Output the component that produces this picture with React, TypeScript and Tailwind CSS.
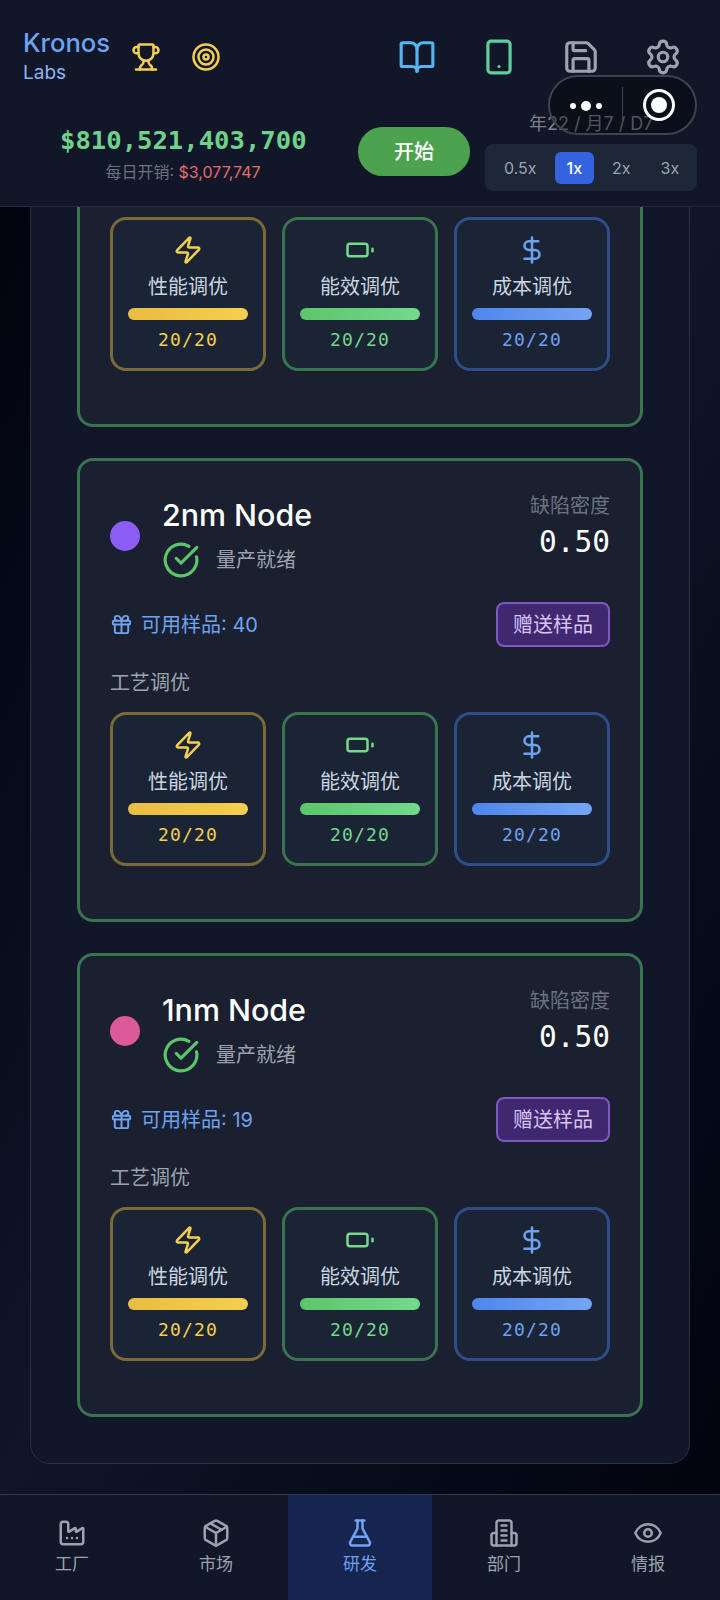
import React from 'react';
import { Trophy, Target, BookOpen, Smartphone, Save, Settings, Zap, DollarSign, Gift, CircleCheckBig, Factory, Package, FlaskConical, Eye } from 'lucide-react';

const sans = 'font-["Inter","Noto_Sans_CJK_SC",sans-serif]';
const mono = 'font-["DejaVu_Sans_Mono",monospace]';

function BatteryIcon() {
  return (
    <svg width="30" height="30" viewBox="0 0 24 24" fill="none" stroke="currentColor" strokeWidth="2" strokeLinecap="round" strokeLinejoin="round">
      <rect x="2" y="7" width="16" height="10" rx="2" />
      <path d="M22 11v2" />
    </svg>
  );
}

function Tile({ kind }: { kind: 'perf' | 'power' | 'cost' }) {
  const c = {
    perf: { label: '性能调优', border: 'border-[#7a6a38]', text: 'text-[#f5cf4f]', bar: 'from-[#e8bd42] to-[#f5cf4f]', icon: <Zap size={30} strokeWidth={2} /> },
    power: { label: '能效调优', border: 'border-[#3a7350]', text: 'text-[#74d98c]', bar: 'from-[#5cc56c] to-[#74d98c]', icon: <BatteryIcon /> },
    cost: { label: '成本调优', border: 'border-[#2f4d8a]', text: 'text-[#6ea2f2]', bar: 'from-[#4f86ec] to-[#74a5f4]', icon: <DollarSign size={30} strokeWidth={2} /> },
  }[kind];
  return (
    <div className={`h-[154px] rounded-2xl border-[3px] ${c.border} bg-[#1a2434] flex flex-col items-center pt-[15px]`}>
      <div className={`h-[30px] ${c.text}`}>{c.icon}</div>
      <div className="mt-[8px] text-[20px] leading-[28px] text-[#cbd5e1]">{c.label}</div>
      <div className={`mt-[7px] h-[12px] w-[120px] rounded-full bg-gradient-to-r ${c.bar}`} />
      <div className={`mt-[7px] text-[18px] leading-[26px] tracking-[1.2px] ${mono} ${c.text}`}>20/20</div>
    </div>
  );
}

function Node({ name, dot, samples }: { name: string; dot: string; samples: number }) {
  return (
    <div className="h-[464px] rounded-2xl border-[3px] border-[#3a7350] bg-[#1a2030] px-[30px] pt-[30px]">
      <div className="flex justify-between">
        <div className="flex items-center gap-[22px]">
          <div className={`w-[30px] h-[30px] rounded-full mt-[2px] ${dot}`} />
          <div>
            <div className="text-[30.4px] leading-[38px] font-medium text-white mt-[5px]">{name}</div>
            <div className="flex items-center gap-[16px] mt-[7px] text-[20px] text-[#9ca3af]">
              <CircleCheckBig size={38} strokeWidth={2} className="text-[#5cc56c]" />
              <span>量产就绪</span>
            </div>
          </div>
        </div>
        <div className="text-right">
          <div className="text-[20px] leading-[28px] text-[#6b7280] mt-[1px]">缺陷密度</div>
          <div className={`text-[29.5px] leading-[38px] text-white mt-[3px] ${mono}`}>0.50</div>
        </div>
      </div>
      <div className="flex justify-between items-center mt-[23px]">
        <div className="flex items-center gap-[8px] text-[20px] text-[#6ea2f2]">
          <Gift size={23} strokeWidth={2} />
          <span>可用样品: {samples}</span>
        </div>
        <button className="w-[114px] h-[45px] rounded-lg border-2 border-[#7e57c2] bg-[#3f2870] text-[20px] text-[#d8c4f5]">赠送样品</button>
      </div>
      <div className="text-[20px] leading-[28px] text-[#9ca3af] mt-[22px]">工艺调优</div>
      <div className="grid grid-cols-3 gap-[16px] mt-[15px]">
        <Tile kind="perf" />
        <Tile kind="power" />
        <Tile kind="cost" />
      </div>
    </div>
  );
}

function DeptIcon() {
  return (
    <svg width="30" height="30" viewBox="0 0 24 24" fill="none" stroke="currentColor" strokeWidth="2" strokeLinecap="round" strokeLinejoin="round">
      <path d="M6 22V4a2 2 0 0 1 2-2h8a2 2 0 0 1 2 2v18" />
      <path d="M6 12H4a2 2 0 0 0-2 2v6a2 2 0 0 0 2 2h16a2 2 0 0 0 2-2v-6a2 2 0 0 0-2-2h-2" />
      <path d="M10 6h4M10 10h4M10 14h4M10 18h4" />
    </svg>
  );
}

function Tab({ icon, label, active }: { icon: React.ReactNode; label: string; active?: boolean }) {
  return (
    <div className={`flex-1 flex flex-col items-center pt-[23px] ${active ? 'bg-[#152550] text-[#6ea2f2]' : 'text-[#9ca3af]'}`}>
      {icon}
      <div className="text-[17px] leading-[26px] mt-[3px]">{label}</div>
    </div>
  );
}

export default function App() {
  return (
    <div className={`relative h-[1600px] w-[720px] overflow-hidden flex flex-col bg-[#111728] ${sans}`}>
      <header className="relative z-10 h-[207px] shrink-0 bg-[#111728] border-b border-[#252b3d]">
        <div className="flex items-start pt-[28px] pl-[23px] pr-[38px]">
          <div className="w-[86px] text-[#6ea2f2]">
            <div className="text-[25.6px] leading-[30px] font-medium whitespace-nowrap">Kronos</div>
            <div className="text-[19px] leading-[24px] mt-[3px] text-[#8fb4f0]">Labs</div>
          </div>
          <div className="ml-[22px] mt-[14px] flex gap-[30px] text-[#f5cf4f]">
            <Trophy size={30} strokeWidth={2} />
            <Target size={30} strokeWidth={2} />
          </div>
          <div className="ml-auto mt-[10px] flex items-center gap-[44px]">
            <BookOpen size={38} strokeWidth={2} className="text-[#56b4f0]" />
            <Smartphone size={38} strokeWidth={2} className="text-[#5ed0a0]" />
            <Save size={38} strokeWidth={2} className="text-[#9ca3af]" />
            <Settings size={38} strokeWidth={2} className="text-[#9ca3af]" />
          </div>
        </div>
        <div className="flex items-start mt-[39px] pl-[60px] pr-[23px]">
          <div className="w-[246px] text-center">
            <div className={`text-[25.6px] leading-[32px] font-bold text-[#6fd28a] ${mono}`}>$810,521,403,700</div>
            <div className="text-[16px] leading-[22px] text-[#6b7280] mt-[5px]">每日开销: <span className="text-[#e26d6d]">$3,077,747</span></div>
          </div>
          <button className="ml-[52px] mt-[3px] w-[112px] h-[49px] rounded-full bg-[#4ca24f] text-white text-[20px] font-medium">开始</button>
          <div className="ml-[15px] mt-[-13px]">
            <div className="pl-[44px] text-[18px] leading-[26px] text-[#7d818c]">年22 / 月7 / D7</div>
            <div className="mt-[7px] w-[212px] h-[47px] rounded-lg bg-[#1e2738] flex items-center gap-[6px] px-[7px] text-[16px] text-[#9ca3af]">
              <div className="px-[12px] leading-[32px]">0.5x</div>
              <div className="px-[12px] leading-[32px] rounded-md bg-[#3563e0] text-white font-medium">1x</div>
              <div className="px-[12px] leading-[32px]">2x</div>
              <div className="px-[12px] leading-[32px]">3x</div>
            </div>
          </div>
        </div>
      </header>

      <main className="flex-1 min-h-0 overflow-hidden flex flex-col justify-end bg-gradient-to-br from-[#02040e] via-[#101629] to-[#02040e]">
        <div className="mx-[30px] mb-[30px] shrink-0 rounded-[20px] border border-[#2a3040] bg-[#111728] px-[46px] pb-[46px] flex flex-col gap-[31px]">
          <Node name="3nm Node" dot="bg-[#3b82f6]" samples={40} />
          <Node name="2nm Node" dot="bg-[#8b5cf6]" samples={40} />
          <Node name="1nm Node" dot="bg-[#dc5a9a]" samples={19} />
        </div>
      </main>

      <nav className="h-[106px] shrink-0 flex border-t border-[#343a4d] bg-[#111728]">
        <Tab icon={<Factory size={30} strokeWidth={2} />} label="工厂" />
        <Tab icon={<Package size={30} strokeWidth={2} />} label="市场" />
        <Tab active icon={<FlaskConical size={30} strokeWidth={2} />} label="研发" />
        <Tab icon={<DeptIcon />} label="部门" />
        <Tab icon={<Eye size={30} strokeWidth={2} />} label="情报" />
      </nav>

      <div className="absolute z-20 left-[548px] top-[75px] w-[149px] h-[60px] rounded-full border-2 border-[#3f4250] bg-black/35 flex items-center">
        <div className="w-[72px] mt-[2px] flex items-center justify-center gap-[5px]">
          <span className="w-[6px] h-[6px] rounded-full bg-white" />
          <span className="w-[10px] h-[10px] rounded-full bg-white" />
          <span className="w-[6px] h-[6px] rounded-full bg-white" />
        </div>
        <div className="w-px h-[36px] bg-[#3f4250]" />
        <div className="flex-1 flex items-center justify-center">
          <div className="w-[32px] h-[32px] rounded-full border-[3px] border-white flex items-center justify-center">
            <div className="w-[16px] h-[16px] rounded-full bg-white" />
          </div>
        </div>
      </div>
    </div>
  );
}
